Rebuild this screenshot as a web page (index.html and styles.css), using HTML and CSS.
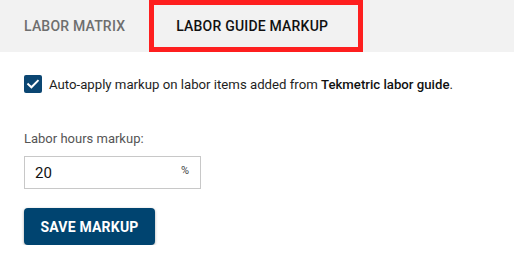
FILE: index.html
```html
<!DOCTYPE html>
<html>
<head>
<meta charset="utf-8">
<link rel="stylesheet" href="styles.css">
</head>
<body>
<div class="tabs">
  <div class="tab">LABOR MATRIX</div>
  <div class="tab active">LABOR GUIDE MARKUP</div>
</div>
<div class="content">
  <label class="check-row">
    <span class="checkbox">
      <svg width="18" height="18" viewBox="0 0 18 18"><path d="M4.2 9.2 L7.4 12.3 L13.8 5.8" fill="none" stroke="#fff" stroke-width="2" stroke-linecap="square"/></svg>
    </span>
    <span class="check-text">Auto-apply markup on labor items added from <b>Tekmetric labor guide</b>.</span>
  </label>
  <div class="field-label">Labor hours markup:</div>
  <div class="input">
    <span class="value">20</span>
    <span class="unit">%</span>
  </div>
  <button class="btn">SAVE MARKUP</button>
</div>
</body>
</html>
```
FILE: styles.css
```css
* { box-sizing: border-box; }
body {
  margin: 0;
  font-family: Roboto, "Liberation Sans", sans-serif;
  background: #fff;
  color: #222;
}
.tabs {
  display: flex;
  height: 52px;
  background: #f2f2f2;
}
.tab {
  display: flex;
  align-items: center;
  padding: 0 22px 0 24px;
  font-size: 14px;
  font-weight: 500;
  color: #6e6e6e;
  letter-spacing: 0.2px;
}
.tab.active {
  margin-left: 2px;
  width: 214px;
  padding: 0 0 0 22px;
  color: #111;
  border: 5px solid #fe1f1f;
}
.content {
  padding: 23px 24px 0;
}
.check-row {
  display: flex;
  align-items: center;
  gap: 7px;
}
.checkbox {
  width: 18px;
  height: 18px;
  border-radius: 2px;
  background: #0b4672;
  display: flex;
}
.check-text {
  font-size: 13.2px;
  color: #1e1e1e;
}
.check-text b { font-weight: 500; color: #111; }
.field-label {
  margin-top: 38px;
  font-size: 13px;
  color: #555;
}
.input {
  margin-top: 10px;
  width: 177px;
  height: 33px;
  border: 1px solid #c8c8c8;
  display: flex;
  align-items: center;
  justify-content: space-between;
  padding: 0 11px 0 10px;
}
.value { font-size: 15px; color: #111; }
.unit { font-size: 11px; color: #444; margin-top: -5px; }
.btn {
  display: block;
  margin-top: 19px;
  width: 131px;
  height: 37px;
  border: none;
  border-radius: 4px;
  background: #004470;
  color: #fff;
  font-family: Roboto, "Liberation Sans", sans-serif;
  font-size: 14px;
  font-weight: 700;
  letter-spacing: 0.2px;
  box-shadow: 0 1px 3px rgba(0,0,0,0.35);
  padding: 0;
}
```
